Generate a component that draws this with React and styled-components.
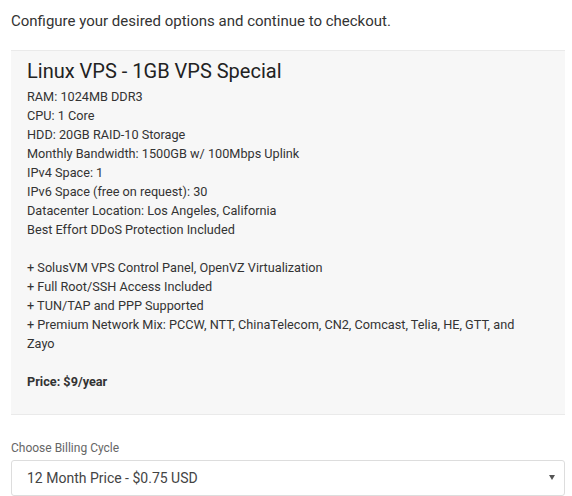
import React from "react";
import styled, { createGlobalStyle } from "styled-components";

const GlobalStyle = createGlobalStyle`
  body {
    margin: 0;
    background: #fff;
    font-family: Roboto, "Liberation Sans", sans-serif;
    color: #333;
  }
`;

const Page = styled.div`
  padding: 12px 7px 0 11px;
`;

const Intro = styled.p`
  margin: 0 0 19px;
  font-size: 15px;
  line-height: 19px;
  color: #333;
`;

const ProductCard = styled.div`
  background: #f7f7f7;
  border-top: 1px solid #eaeaea;
  border-bottom: 1px solid #eaeaea;
  padding: 8px 16px 23px;
`;

const ProductTitle = styled.h2`
  margin: 0 0 4px;
  font-size: 20px;
  font-weight: 400;
  line-height: 24px;
  color: #222;
`;

const Description = styled.div`
  max-width: 500px;
  font-size: 12.7px;
  line-height: 19px;
  color: #333;
`;

const Price = styled.strong`
  font-weight: 700;
`;

const Field = styled.div`
  margin-top: 25px;
`;

const Label = styled.label`
  display: block;
  font-size: 12px;
  line-height: 16px;
  color: #666;
  margin-bottom: 4px;
`;

const SelectWrap = styled.div`
  position: relative;
`;

const Select = styled.select`
  appearance: none;
  width: 100%;
  height: 36px;
  padding: 0 15px;
  border: 1px solid #ddd;
  border-radius: 3px;
  background: #fff;
  font-family: Roboto, "Liberation Sans", sans-serif;
  font-size: 14px;
  color: #444;
  outline: none;
`;

const Arrow = styled.span`
  position: absolute;
  right: 10px;
  top: 15px;
  width: 0;
  height: 0;
  border-left: 3px solid transparent;
  border-right: 3px solid transparent;
  border-top: 5px solid #555;
  pointer-events: none;
`;

const specs = [
  "RAM: 1024MB DDR3",
  "CPU: 1 Core",
  "HDD: 20GB RAID-10 Storage",
  "Monthly Bandwidth: 1500GB w/ 100Mbps Uplink",
  "IPv4 Space: 1",
  "IPv6 Space (free on request): 30",
  "Datacenter Location: Los Angeles, California",
  "Best Effort DDoS Protection Included",
];

const extras = [
  "+ SolusVM VPS Control Panel, OpenVZ Virtualization",
  "+ Full Root/SSH Access Included",
  "+ TUN/TAP and PPP Supported",
  "+ Premium Network Mix: PCCW, NTT, ChinaTelecom, CN2, Comcast, Telia, HE, GTT, and Zayo",
];

const App = () => {
  return (
    <>
      <GlobalStyle />
      <Page>
        <Intro>Configure your desired options and continue to checkout.</Intro>
        <ProductCard>
          <ProductTitle>Linux VPS - 1GB VPS Special</ProductTitle>
          <Description>
            {specs.map((s, i) => (
              <div key={i}>{s}</div>
            ))}
            <br />
            {extras.map((s, i) => (
              <div key={i}>{s}</div>
            ))}
            <br />
            <Price>Price: $9/year</Price>
          </Description>
        </ProductCard>
        <Field>
          <Label>Choose Billing Cycle</Label>
          <SelectWrap>
            <Select defaultValue="12">
              <option value="12">12 Month Price - $0.75 USD</option>
            </Select>
            <Arrow />
          </SelectWrap>
        </Field>
      </Page>
    </>
  );
};

export default App;
